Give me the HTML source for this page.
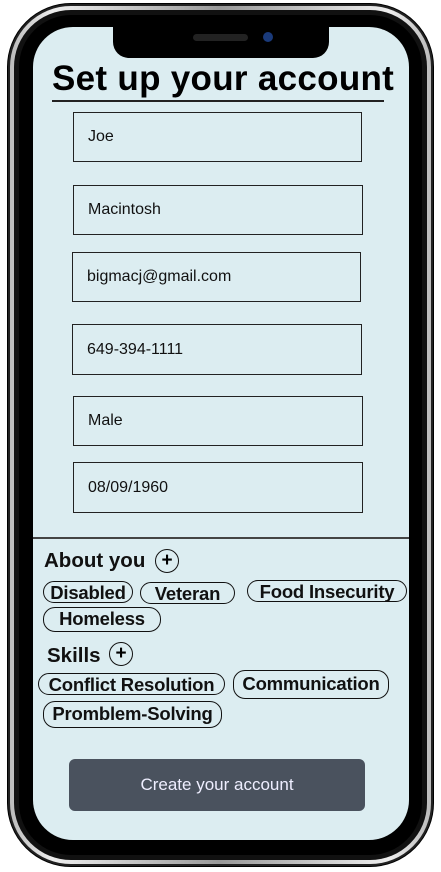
<!DOCTYPE html>
<html><head><style>
body{margin:0;width:441px;height:872px;background:#fff;position:relative;overflow:hidden;font-family:"Liberation Sans",sans-serif}
.a{position:absolute}
.f{position:absolute;border:1.5px solid #222;box-sizing:border-box;font-size:16px;color:#111;padding-left:14px;display:flex;align-items:center}
.p{position:absolute;border:1.5px solid #111;border-radius:12px;font-weight:bold;font-size:18.5px;height:22px;line-height:21px;box-sizing:border-box;text-align:center;color:#111;white-space:nowrap;letter-spacing:-0.2px}
.h{position:absolute;font-weight:bold;font-size:20.5px;color:#111}
.c{position:absolute;width:24px;height:24px;border:1.3px solid #111;border-radius:50%;box-sizing:border-box;text-align:center;line-height:21px;font-weight:bold;font-size:19px}
</style></head><body>
<div class="a" style="left:7px;top:3px;width:427px;height:864px;border-radius:64px;background:#222;border:1px solid #000;box-sizing:border-box"></div>
<div class="a" style="left:10px;top:6px;width:421px;height:858px;border-radius:61px;background:linear-gradient(90deg,#bbb,#eee 10%,#999 50%,#eee 90%,#bbb)"></div>
<div class="a" style="left:14px;top:10px;width:413px;height:850px;border-radius:57px;background:#111"></div>
<div class="a" style="left:19px;top:15px;width:403px;height:840px;border-radius:52px;background:#000"></div>
<div class="a" style="left:33px;top:27px;width:376px;height:813px;border-radius:40px;background:#dcedf1"></div>
<div class="a" style="left:113px;top:20px;width:216px;height:38px;background:#000;border-radius:0 0 16px 16px"></div>
<div class="a" style="left:193px;top:34px;width:55px;height:7px;background:#222;border-radius:4px"></div>
<div class="a" style="left:263px;top:32px;width:10px;height:10px;background:#1a3a7a;border-radius:50%"></div>
<div class="a" style="left:52px;top:59px;font-size:35px;font-weight:bold;color:#000;letter-spacing:0.3px;white-space:nowrap">Set up your account</div>
<div class="a" style="left:52px;top:100px;width:332px;height:1.5px;background:#222"></div>
<div class="f" style="left:73px;top:112px;width:289px;height:50px">Joe</div>
<div class="f" style="left:73px;top:185px;width:290px;height:50px">Macintosh</div>
<div class="f" style="left:72px;top:252px;width:289px;height:50px">bigmacj@gmail.com</div>
<div class="f" style="left:72px;top:324px;width:290px;height:51px">649-394-1111</div>
<div class="f" style="left:73px;top:396px;width:290px;height:50px">Male</div>
<div class="f" style="left:73px;top:462px;width:290px;height:51px">08/09/1960</div>
<div class="a" style="left:33px;top:537px;width:376px;height:1.5px;background:#444"></div>
<div class="h" style="left:44px;top:549px">About you</div>
<div class="c" style="left:155px;top:549px">+</div>
<div class="p" style="left:43px;top:581px;width:90px">Disabled</div>
<div class="p" style="left:140px;top:582px;width:95px">Veteran</div>
<div class="p" style="left:247px;top:580px;width:160px">Food Insecurity</div>
<div class="p" style="left:43px;top:607px;width:118px;height:25px">Homeless</div>
<div class="h" style="left:47px;top:644px">Skills</div>
<div class="c" style="left:109px;top:642px">+</div>
<div class="p" style="left:38px;top:673px;width:187px">Conflict Resolution</div>
<div class="p" style="left:233px;top:670px;width:156px;height:29px;line-height:26px">Communication</div>
<div class="p" style="left:43px;top:701px;width:179px;height:27px;line-height:24px">Promblem-Solving</div>
<div class="a" style="left:69px;top:759px;width:296px;height:52px;background:#4a525e;border-radius:6px;color:#eef;font-size:17px;text-align:center;line-height:52px">Create your account</div>
</body></html>
